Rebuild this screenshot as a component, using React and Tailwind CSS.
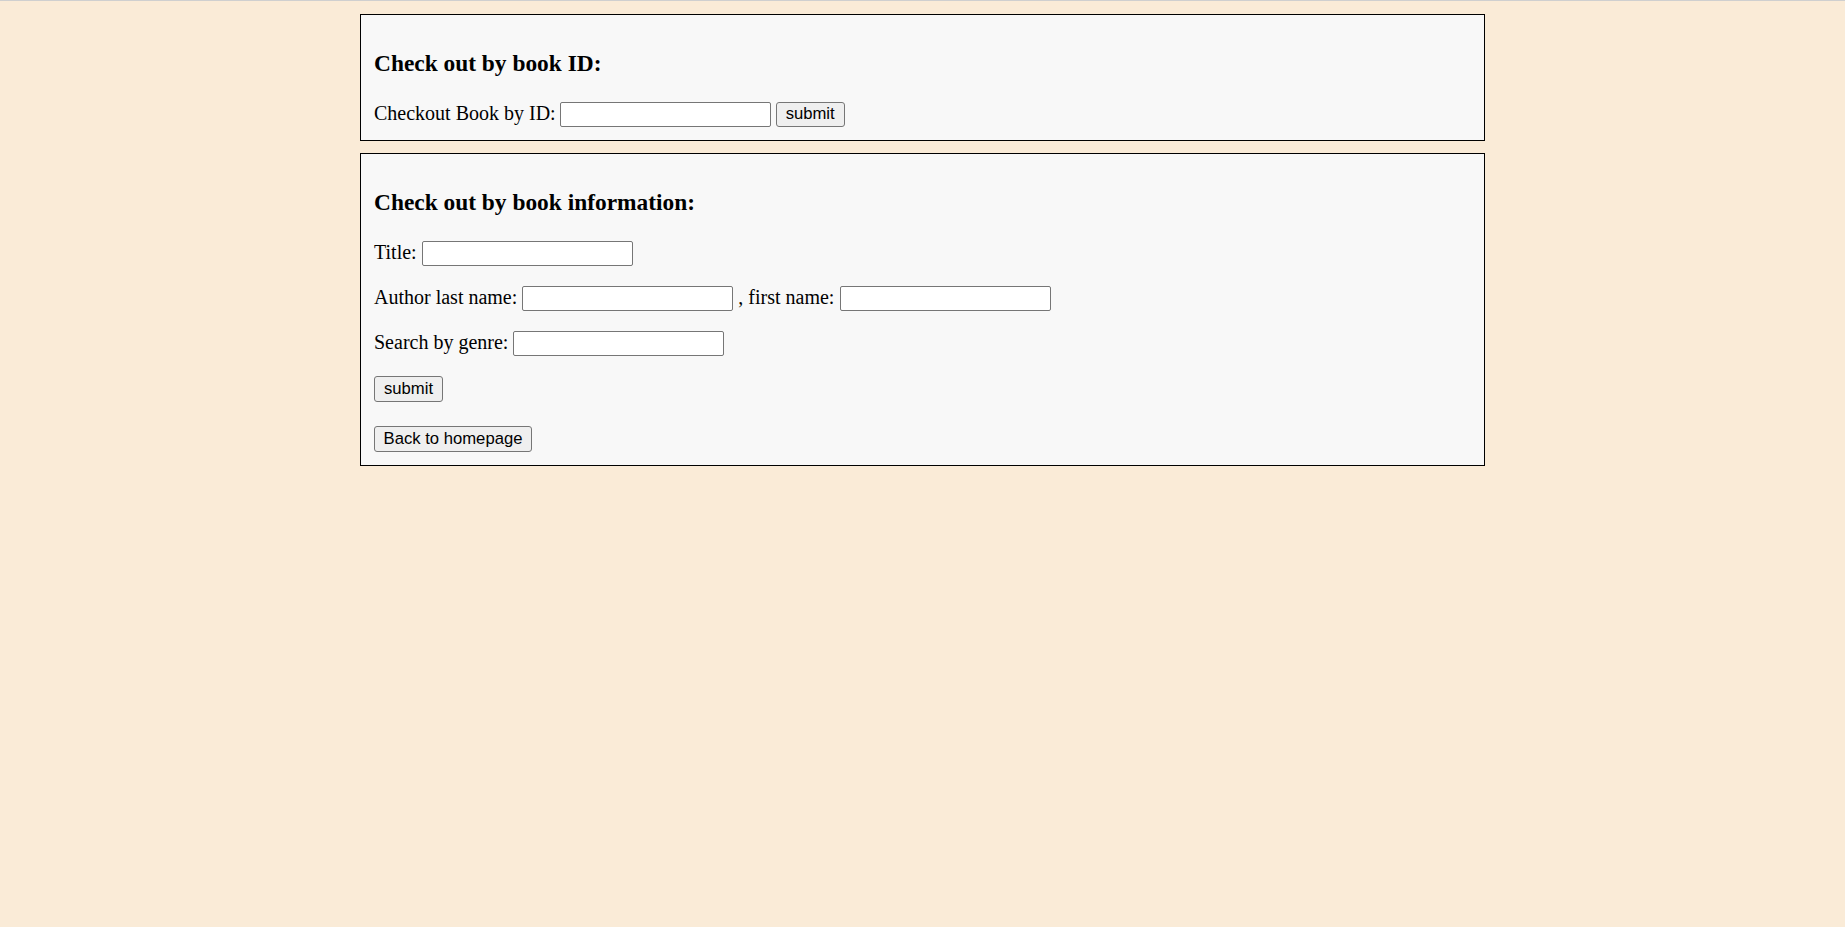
const serif = { fontFamily: '"Liberation Serif", "Times New Roman", serif' };

const TextBox = ({ className = '' }) => (
    <input
        type="text"
        className={`w-[211px] h-[25px] shrink-0 bg-white border border-[#767676] rounded-[2px] px-[2px] text-[16.67px] outline-none ${className}`}
        style={{ fontFamily: '"Liberation Sans", Arial, sans-serif' }}
    />
);

const Button = ({ children, className = '' }) => (
    <button
        type="button"
        className={`h-[25px] shrink-0 bg-[#efefef] border border-[#767676] rounded-[3px] px-[8px] text-[16.67px] leading-none text-black ${className}`}
        style={{ fontFamily: '"Liberation Sans", Arial, sans-serif' }}
    >
        {children}
    </button>
);

const Row = ({ children, className = '' }) => (
    <div className={`flex items-start h-[25px] text-[20px] leading-[22px] text-black ${className}`}>
        {children}
    </div>
);

const App = () => {
    return (
        <div className="min-h-screen bg-[#faebd7]" style={serif}>
            <div className="h-px bg-[#cfcfcf]" />
            <div className="pt-[13px] flex flex-col items-center">
                {/* by id */}
                <div className="w-[1125px] border border-black bg-[#f8f8f8] px-[13px] pt-[35px] pb-[13px]">
                    <h3 className="text-[23.4px] leading-[27px] font-bold text-black">Check out by book ID:</h3>
                    <Row className="mt-[25px]">
                        <span>Checkout Book by ID:</span>
                        <TextBox className="ml-[4px]" />
                        <Button className="ml-[5px] w-[69px]">submit</Button>
                    </Row>
                </div>

                {/* by info */}
                <div className="w-[1125px] mt-[12px] border border-black bg-[#f8f8f8] px-[13px] pt-[35px] pb-[13px]">
                    <h3 className="text-[23.4px] leading-[27px] font-bold text-black">Check out by book information:</h3>
                    <Row className="mt-[25px]">
                        <span>Title:</span>
                        <TextBox className="ml-[5px]" />
                    </Row>
                    <Row className="mt-[20px]">
                        <span>Author last name:</span>
                        <TextBox className="ml-[5px]" />
                        <span className="ml-[5px]">, first name:</span>
                        <TextBox className="ml-[6px]" />
                    </Row>
                    <Row className="mt-[20px]">
                        <span>Search by genre:</span>
                        <TextBox className="ml-[5px]" />
                    </Row>
                    <div className="mt-[20px] flex">
                        <Button className="h-[26px] w-[69px]">submit</Button>
                    </div>
                    <div className="mt-[24px] flex">
                        <Button className="h-[26px] w-[158px]">Back to homepage</Button>
                    </div>
                </div>
            </div>
        </div>
    );
};

export default App;
